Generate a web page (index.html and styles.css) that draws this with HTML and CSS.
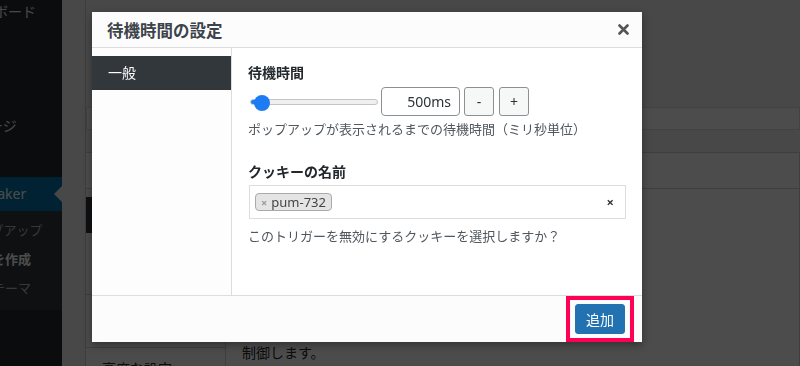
FILE: index.html
```html
<!DOCTYPE html>
<html lang="ja">
<head>
    <meta charset="UTF-8">
    <meta name="viewport" content="width=device-width, initial-scale=1.0">
    <title>ポップアップを作成 - Popup Maker</title>
    <link rel="stylesheet" href="styles.css">
</head>
<body>
    <div class="wp">
        <div id="adminmenu">
            <ul class="menu">
                <li class="menu-item first">ダッシュボード</li>
                <li class="menu-sep"></li>
                <li class="menu-item">投稿</li>
                <li class="menu-item">メディア</li>
                <li class="menu-item page">固定ページ</li>
                <li class="menu-item">コメント</li>
                <li class="menu-item current">Popup Maker<span class="menu-arrow"></span></li>
                <li class="submenu">
                    <ul>
                        <li>すべてのポップアップ</li>
                        <li class="current">ポップアップを作成</li>
                        <li>ポップアップテーマ</li>
                    </ul>
                </li>
            </ul>
        </div>
        <div id="wpcontent">
            <div class="wrap">
                <div class="title-field"></div>
                <div class="postbox">
                    <h2 class="postbox-title">ポップアップ設定</h2>
                    <div class="postbox-body">
                        <ul class="pb-tabs">
                            <li class="active">トリガー</li>
                            <li class="tall">ターゲット</li>
                            <li class="mid">表示</li>
                            <li>高度な設定</li>
                        </ul>
                        <div class="pb-panel">
                            <p>トリガーはポップアップを開くタイミングを<br>制御します。</p>
                        </div>
                    </div>
                </div>
            </div>
        </div>
    </div>

    <div class="overlay"></div>

    <div class="modal">
        <div class="modal-header">
            <h2>待機時間の設定</h2>
            <button class="modal-close" title="閉じる">
                <svg width="11" height="11" viewBox="0 0 11 11">
                    <path d="M1.5 1.5 L9.5 9.5 M9.5 1.5 L1.5 9.5" stroke="#555" stroke-width="2.6" stroke-linecap="round"/>
                </svg>
            </button>
        </div>
        <div class="modal-body">
            <ul class="modal-tabs">
                <li class="active">一般</li>
            </ul>
            <div class="modal-fields">
                <div class="field">
                    <label class="field-label">待機時間</label>
                    <div class="range-row">
                        <input type="range" class="delay-range" min="0" max="20000" step="100" value="500">
                        <input type="text" class="delay-value" value="500ms">
                        <button class="range-btn">-</button>
                        <button class="range-btn plus">+</button>
                    </div>
                    <p class="field-desc">ポップアップが表示されるまでの待機時間（ミリ秒単位）</p>
                </div>
                <div class="field">
                    <label class="field-label">クッキーの名前</label>
                    <div class="select2">
                        <span class="choice"><span class="choice-x">×</span>pum-732</span>
                        <span class="select-clear">×</span>
                    </div>
                    <p class="field-desc">このトリガーを無効にするクッキーを選択しますか？</p>
                </div>
            </div>
        </div>
        <div class="modal-footer">
            <div class="highlight">
                <button class="button-primary">追加</button>
            </div>
        </div>
    </div>
</body>
</html>
```

FILE: styles.css
```css
/* 管理画面（背景） */
body {
    margin: 0;
    height: 366px;
    overflow: hidden;
    background-color: #f1f1f1;
    font-family: "Noto Sans", "Noto Sans CJK JP", sans-serif;
    font-size: 14px;
    color: #23282d;
}

ul {
    list-style: none;
    margin: 0;
    padding: 0;
}

.wp {
    display: flex;
    height: 100vh;
}

#adminmenu {
    width: 62px;
    flex-shrink: 0;
    overflow: hidden;
    background-color: #23282d;
}

.menu {
    width: 160px;
    margin-left: -98px;
}

.menu-item {
    position: relative;
    height: 34px;
    line-height: 34px;
    padding-left: 36px;
    color: #eee;
    white-space: nowrap;
}

.menu-item.first {
    margin-top: -5px;
}

.menu-item.page {
    padding-left: 45px;
}

.menu-sep {
    height: 12px;
}

.menu-item.current {
    background-color: #0073aa;
    color: #fff;
}

.menu-arrow {
    position: absolute;
    right: 0;
    top: 9px;
    border: 8px solid transparent;
    border-right-color: #f1f1f1;
}

.submenu {
    background-color: #32373c;
    padding: 5px 0 7px;
}

.submenu li {
    height: 29px;
    line-height: 29px;
    padding-left: 12px;
    font-size: 13px;
    color: rgba(240, 245, 250, 0.7);
    white-space: nowrap;
}

.submenu li.current {
    color: #fff;
    font-weight: bold;
}

#wpcontent {
    flex: 1;
    padding-left: 23px;
}

.wrap {
    border-left: 1px solid #ccc;
    height: 100%;
    padding-top: 107px;
    box-sizing: border-box;
}

.title-field {
    height: 21px;
    border: 1px solid #ddd;
    background-color: #fff;
    margin-bottom: 22px;
}

.postbox {
    background-color: #fff;
    border: 1px solid #ccd0d4;
    border-left: none;
}

.postbox-title {
    margin: 0;
    height: 35px;
    line-height: 35px;
    padding-left: 12px;
    font-size: 14px;
    border-bottom: 1px solid #ccd0d4;
}

.postbox-body {
    display: flex;
}

.pb-tabs {
    width: 140px;
    box-sizing: border-box;
    border-right: 1px solid #ccd0d4;
    background-color: #fafafa;
    padding-top: 8px;
}

.pb-tabs li {
    height: 36px;
    padding: 10px 0 0 16px;
    box-sizing: border-box;
    border-bottom: 1px solid #eee;
}

.pb-tabs li.active {
    background-color: #32373c;
    color: #fff;
    border-bottom: none;
}

.pb-tabs li.tall {
    height: 62px;
    border-bottom-color: #ccd0d4;
}

.pb-tabs li.mid {
    height: 53px;
    border-bottom-color: #ccd0d4;
}

.pb-panel {
    flex: 1;
    padding: 0 16px;
}

.pb-panel p {
    margin: 0;
    padding-top: 134px;
    line-height: 20px;
}

.overlay {
    position: fixed;
    inset: 0;
    background-color: rgba(0, 0, 0, 0.7);
}

/* モーダル */
.modal {
    position: absolute;
    left: 92px;
    top: 12px;
    width: 550px;
    height: 330px;
    display: flex;
    flex-direction: column;
    background-color: #fff;
    box-shadow: 0 3px 8px rgba(0, 0, 0, 0.35);
}

.modal-header {
    height: 35px;
    flex-shrink: 0;
    display: flex;
    align-items: center;
    justify-content: space-between;
    padding: 0 13px 0 15px;
    background-color: #fcfcfc;
    border-bottom: 1px solid #ddd;
}

.modal-header h2 {
    margin: 0;
    font-size: 16.5px;
    font-weight: bold;
    color: #3c434a;
}

.modal-close {
    border: none;
    background: none;
    padding: 0;
    width: 11px;
    height: 11px;
    display: flex;
    cursor: pointer;
}

.modal-body {
    flex: 1;
    display: flex;
}

.modal-tabs {
    width: 140px;
    box-sizing: border-box;
    border-right: 1px solid #ddd;
    background-color: #fdfdfd;
    padding-top: 8px;
}

.modal-tabs li {
    height: 34px;
    line-height: 34px;
    padding-left: 16px;
    color: #23282d;
}

.modal-tabs li.active {
    background-color: #32373c;
    color: #fff;
}

.modal-fields {
    flex: 1;
    padding: 15px 16px 0;
}

.field-label {
    display: block;
    font-weight: bold;
    line-height: 20px;
    color: #23282d;
}

.field + .field {
    margin-top: 23px;
}

.range-row {
    display: flex;
    align-items: center;
    margin-top: 4px;
    height: 29px;
}

.delay-range {
    -webkit-appearance: none;
    appearance: none;
    width: 128px;
    height: 16px;
    margin: 0 3px 0 2px;
    background: transparent;
}

.delay-range::-webkit-slider-runnable-track {
    height: 6px;
    border: 1px solid #c3c4c7;
    border-radius: 4px;
    background: linear-gradient(to right, #1e7cf2 0 10px, #f0f0f1 10px);
}

.delay-range::-webkit-slider-thumb {
    -webkit-appearance: none;
    width: 16px;
    height: 16px;
    margin-top: -5px;
    border: none;
    border-radius: 50%;
    background-color: #1e7cf2;
}

.delay-value {
    width: 79px;
    height: 29px;
    box-sizing: border-box;
    padding: 0 8px;
    border: 1px solid #8c8f94;
    border-radius: 4px;
    text-align: right;
    font-family: inherit;
    font-size: 14px;
    color: #2c3338;
}

.range-btn {
    width: 30px;
    height: 29px;
    margin-left: 4px;
    padding: 0;
    border: 1px solid #8c8f94;
    border-radius: 3px;
    background-color: #f6f7f7;
    font-family: inherit;
    font-size: 14px;
    color: #2c3338;
}

.range-btn.plus {
    margin-left: 5px;
}

.field-desc {
    margin: 3px 0 0;
    font-size: 13px;
    line-height: 20px;
    color: #50575e;
}

.select2 {
    margin: 3px 0 0 1px;
    height: 34px;
    box-sizing: border-box;
    border: 1px solid #ddd;
    display: flex;
    align-items: center;
    justify-content: space-between;
    padding: 0 11px 0 5px;
}

.choice {
    display: flex;
    align-items: center;
    height: 18px;
    box-sizing: border-box;
    padding: 0 5px;
    border: 1px solid #aaa;
    border-radius: 4px;
    background-color: #e4e4e4;
    font-size: 13px;
    color: #444;
}

.choice-x {
    font-size: 11px;
    font-weight: bold;
    color: #999;
    margin-right: 4px;
}

.select-clear {
    font-size: 13px;
    font-weight: bold;
    color: #333;
}

.select2 + .field-desc {
    margin-top: 7px;
}

.modal-footer {
    height: 46px;
    flex-shrink: 0;
    display: flex;
    justify-content: flex-end;
    padding-right: 8px;
    background-color: #fcfcfc;
    border-top: 1px solid #ddd;
}

.highlight {
    border: 4px solid #ff0055;
    padding: 4px 5px;
    box-sizing: border-box;
    height: 46px;
}

.button-primary {
    height: 30px;
    padding: 0 10px;
    border: 1px solid #2271b1;
    border-radius: 3px;
    background-color: #2271b1;
    color: #fff;
    font-family: inherit;
    font-size: 14px;
    cursor: pointer;
}
```
